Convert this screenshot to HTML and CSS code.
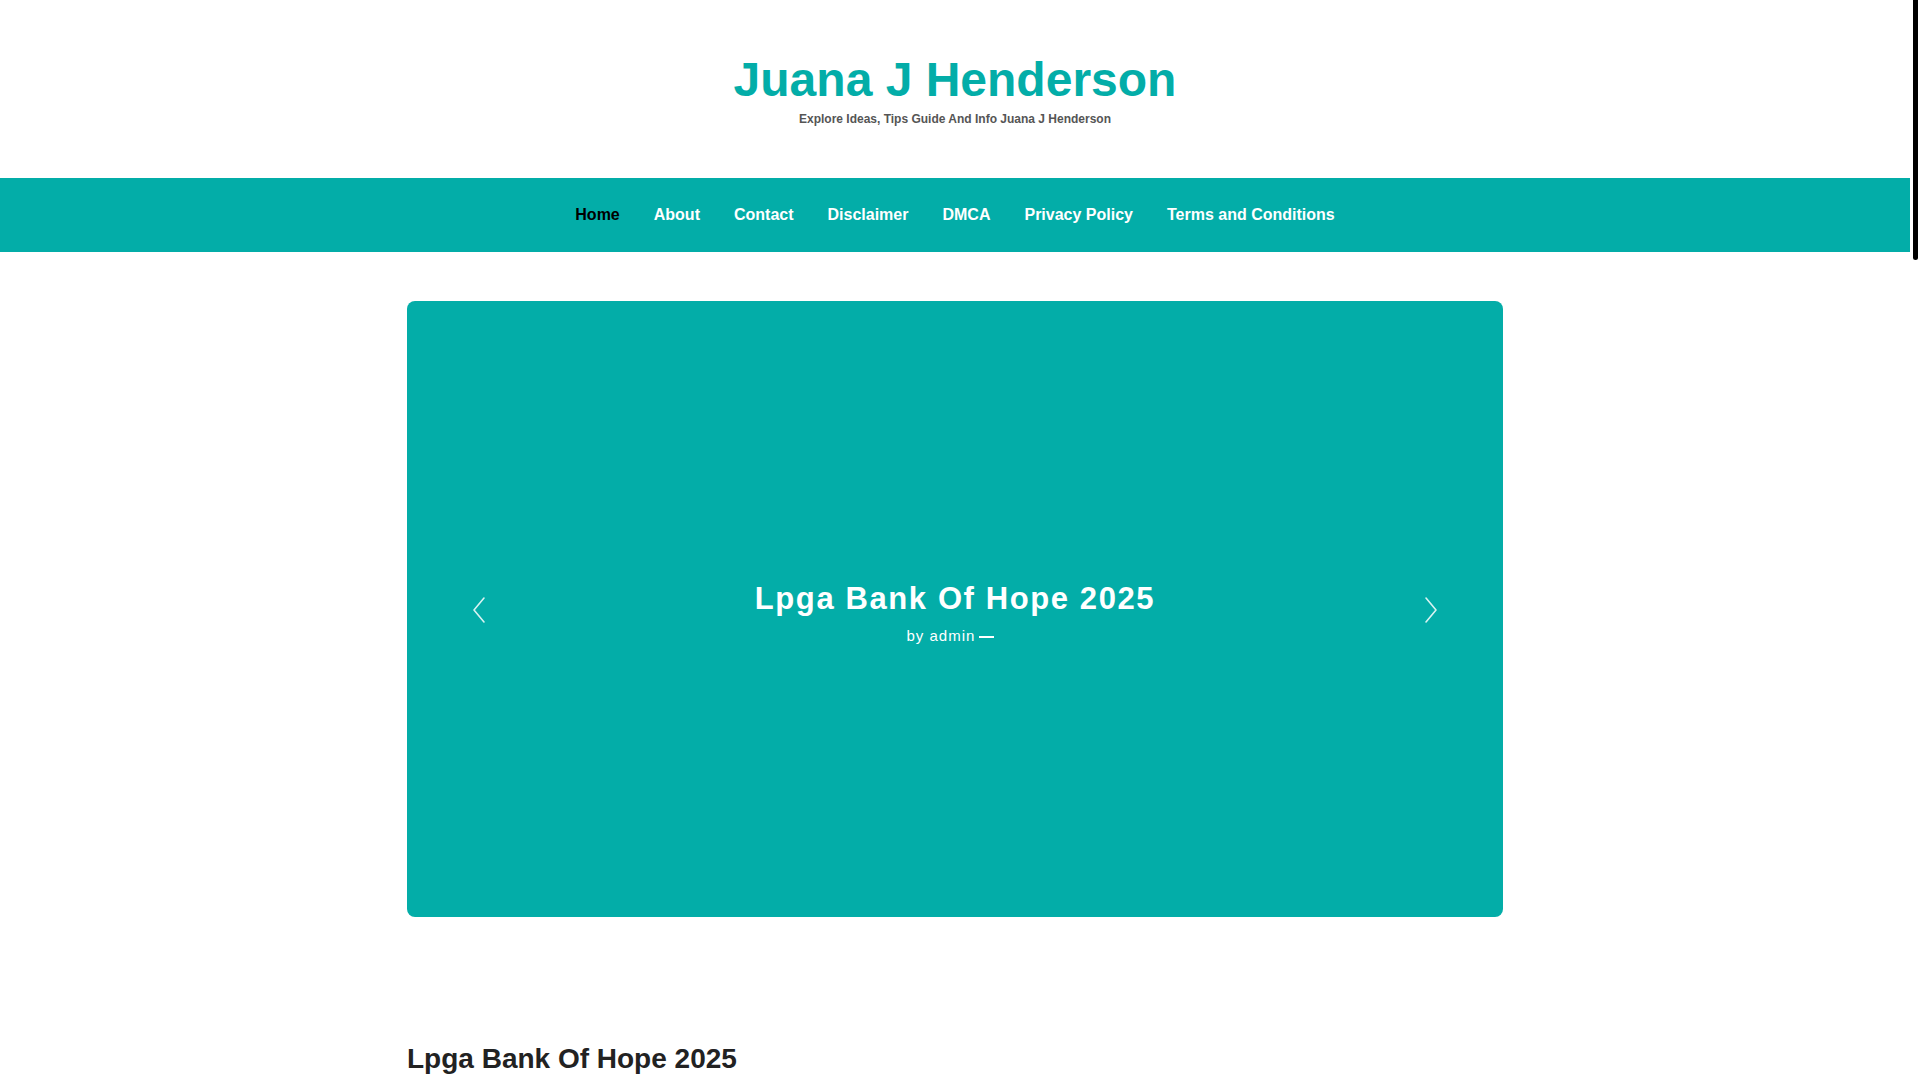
FILE: index.html
```html
<!DOCTYPE html>
<html lang="en">
<head>
<meta charset="utf-8">
<title>Juana J Henderson</title>
<link rel="stylesheet" href="styles.css">
</head>
<body>
<div class="page">
<header class="site-header">
  <h1 class="site-title">Juana J Henderson</h1>
  <p class="site-tagline">Explore Ideas, Tips Guide And Info Juana J Henderson</p>
</header>
<nav class="main-nav">
  <ul class="nav-list">
    <li><a class="nav-link active" href="#">Home</a></li>
    <li><a class="nav-link" href="#">About</a></li>
    <li><a class="nav-link" href="#">Contact</a></li>
    <li><a class="nav-link" href="#">Disclaimer</a></li>
    <li><a class="nav-link" href="#">DMCA</a></li>
    <li><a class="nav-link" href="#">Privacy Policy</a></li>
    <li><a class="nav-link" href="#">Terms and Conditions</a></li>
  </ul>
</nav>
<main class="content">
  <section class="hero">
    <button class="hero-arrow prev" aria-label="Previous">
      <svg width="14" height="28" viewBox="0 0 14 28"><path d="M12 2 L2 14 L12 26" fill="none" stroke="currentColor" stroke-width="1.6" stroke-linecap="round" stroke-linejoin="round"/></svg>
    </button>
    <div class="hero-text">
      <h2 class="hero-title">Lpga Bank Of Hope 2025</h2>
      <p class="hero-meta">by admin <span class="dash"></span></p>
    </div>
    <button class="hero-arrow next" aria-label="Next">
      <svg width="14" height="28" viewBox="0 0 14 28"><path d="M2 2 L12 14 L2 26" fill="none" stroke="currentColor" stroke-width="1.6" stroke-linecap="round" stroke-linejoin="round"/></svg>
    </button>
  </section>
  <article class="post">
    <h2 class="post-title">Lpga Bank Of Hope 2025</h2>
    <p class="post-body">Lpga Bank Of Hope 2025. Explore ideas, tips guide and info about this event.</p>
  </article>
</main>
</div>
<div class="scroll-track" aria-hidden="true"><div class="scroll-thumb"></div></div>
</body>
</html>
```
FILE: styles.css
```css
html, body {
  margin: 0;
  padding: 0;
  background: #ffffff;
  font-family: "Liberation Sans", Arial, sans-serif;
}
.page {
  min-height: 4480px;
  margin-right: 10px;
}
.scroll-track {
  position: fixed;
  top: 0;
  right: 0;
  width: 10px;
  height: 100vh;
  background: #ffffff;
}
.scroll-thumb {
  width: 5px;
  height: 260px;
  margin-left: 3px;
  background: #000000;
  border-radius: 0 0 3px 3px;
}
.site-header {
  padding: 52px 0 52px;
  text-align: center;
}
.site-title {
  margin: 0;
  font-size: 48px;
  line-height: 56px;
  font-weight: 700;
  color: #03ada8;
}
.site-tagline {
  margin: 4px 0 0;
  font-size: 12px;
  line-height: 14px;
  font-weight: 700;
  color: #555555;
}
.main-nav {
  background: #03ada8;
  height: 74px;
  display: flex;
  align-items: center;
  justify-content: center;
}
.nav-list {
  list-style: none;
  margin: 0;
  padding: 0;
  display: flex;
}
.nav-link {
  display: block;
  padding: 0 17px;
  font-size: 16px;
  font-weight: 700;
  line-height: 20px;
  color: #ffffff;
  text-decoration: none;
}
.nav-link.active {
  color: #000000;
}
.content {
  width: 1096px;
  margin: 49px auto 0;
}
.hero {
  height: 616px;
  background: #03ada8;
  border-radius: 8px;
  display: flex;
  align-items: center;
  justify-content: space-between;
  padding: 0 65px 0 65px;
  box-sizing: border-box;
}
.hero-arrow {
  background: none;
  border: 0;
  padding: 0;
  color: rgba(255, 255, 255, 0.85);
  display: flex;
  margin-top: 2px;
}
.hero-text {
  text-align: center;
  color: #ffffff;
  margin-top: 8px;
}
.hero-title {
  margin: 0;
  font-size: 31px;
  line-height: 36px;
  letter-spacing: 1.6px;
  font-weight: 700;
}
.hero-meta {
  margin: 9px 0 0;
  font-size: 15px;
  line-height: 20px;
  letter-spacing: 1px;
}
.dash {
  display: inline-block;
  width: 15px;
  height: 2px;
  background: #ffffff;
  vertical-align: middle;
  margin-left: -2px;
  margin-right: 10px;
}
.post-title {
  margin: 124px 0 0;
  font-size: 28px;
  line-height: 36px;
  font-weight: 700;
  color: #222222;
}
.post-body {
  font-size: 16px;
  line-height: 1.6;
  color: #333333;
}
```
